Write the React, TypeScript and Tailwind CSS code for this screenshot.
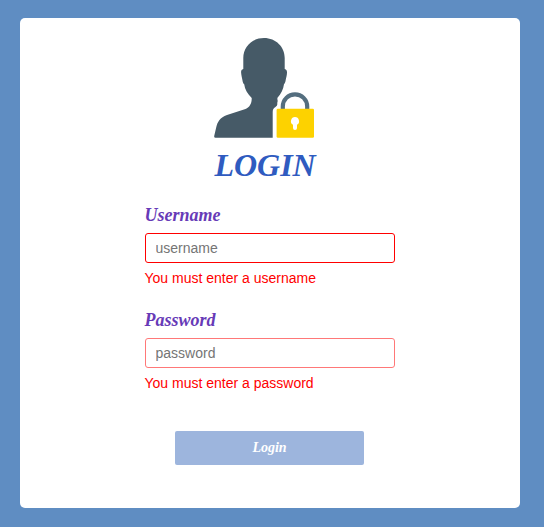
import React from "react";

function UserLockIcon() {
  return (
    <svg viewBox="0 0 100 100" className="block h-[100px] w-[100px]" aria-hidden="true">
      <path
        fill="#465a67"
        d="M50 0C38 0 29.3 9 29.3 20V31C27.600 31.500 27 32.500 27.1 34.500C27.300 37.500 28 39.500 28.400 42C28.700 44.500 29.300 45.500 30.200 46.300C30.800 51.500 33.500 56 37.700 60C37.900 64.500 36 69 31.500 71L13 77C6 79.500 3.500 84 2.300 89L0.200 98Q0 99.800 1.500 99.800H58.700V74C58.700 71 60 70 61.500 69C62.800 68 63.500 67 63.300 65.500C63 64.500 64 63.500 63.600 62.500Q63.200 61 63.500 59.700C67 56 69.300 51.500 70 46.300C70.900 45.500 71.400 44 71.700 42C72.100 39.500 73 37.500 73 34.500C73 32.500 72.500 31.500 70.700 31V20C70.700 9 62 0 50 0Z"
      />
      <path d="M68.800 72V68.500a12.200 12.200 0 0 1 24.400 0V72" fill="none" stroke="#546e7f" strokeWidth="4.200" />
      <rect x="62.600" y="70.700" width="37.400" height="29.100" rx="1.300" fill="#fdd200" />
      <path d="M81 79a4.200 4.200 0 0 1 2 7.800V90a2 2 0 0 1-4 0V86.800A4.200 4.200 0 0 1 81 79Z" fill="#fff" />
    </svg>
  );
}

type FieldProps = {
  label: string;
  name: string;
  type: string;
  error: string;
  borderClass: string;
};

function Field({ label, name, type, error, borderClass }: FieldProps) {
  return (
    <div className="h-[105px] w-[250px]">
      <label
        htmlFor={name}
        className="block h-[28px] font-['Liberation_Serif',serif] text-[18px] leading-[20px] font-bold text-[#673ab7] italic"
      >
        {label}
      </label>
      <input
        id={name}
        type={type}
        placeholder={name}
        className={`block h-[30px] w-full rounded-[3px] border bg-white px-[10px] text-[14px] outline-none placeholder:text-[#757575] ${borderClass}`}
      />
      <p className="mt-[7px] text-[14px] leading-[16px] text-[#ff0000]">{error}</p>
    </div>
  );
}

export default function App() {
  return (
    <div className="h-[527px] bg-[#5f8dc2] pt-[18px] pr-[24px] pl-[20px] font-['Liberation_Sans',sans-serif]">
      <main className="h-[490px] w-[500px] rounded-[5px] bg-white pt-[20px]">
        <div className="ml-[194px]">
          <UserLockIcon />
          <h1 className="mt-[8px] pl-[0.4px] font-['Liberation_Serif',serif] text-[32px] leading-[38px] font-bold text-[#2f5bc0] italic">
            LOGIN
          </h1>
        </div>
        <form className="mt-[21px] ml-[124.5px]">
          <Field label="Username" name="username" type="text" error="You must enter a username" borderClass="border-[#ff0000]" />
          <Field label="Password" name="password" type="password" error="You must enter a password" borderClass="border-[#ff7878]" />
          <button
            type="button"
            className="mt-[16px] ml-[30.5px] block h-[34px] w-[189px] rounded-[2px] bg-[#9db5dd] pb-[2px] font-['Liberation_Serif',serif] text-[14px] font-bold text-white italic"
          >
            Login
          </button>
        </form>
      </main>
    </div>
  );
}
